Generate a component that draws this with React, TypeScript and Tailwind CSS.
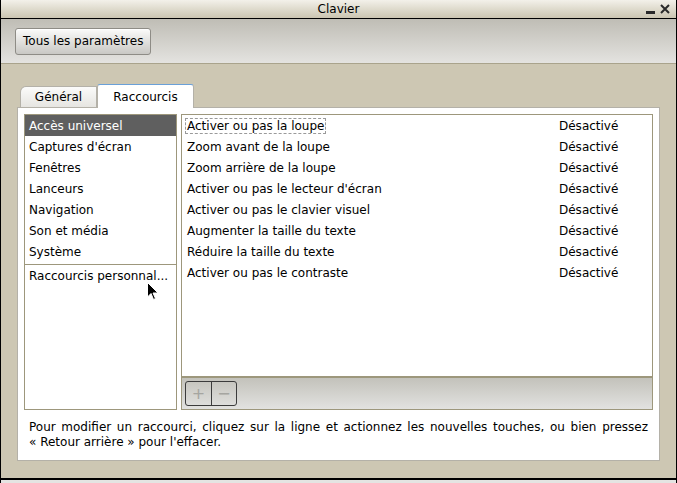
const categories = [
  "Accès universel",
  "Captures d'écran",
  "Fenêtres",
  "Lanceurs",
  "Navigation",
  "Son et média",
  "Système",
];

const shortcuts = [
  "Activer ou pas la loupe",
  "Zoom avant de la loupe",
  "Zoom arrière de la loupe",
  "Activer ou pas le lecteur d'écran",
  "Activer ou pas le clavier visuel",
  "Augmenter la taille du texte",
  "Réduire la taille du texte",
  "Activer ou pas le contraste",
];

function Cursor() {
  return (
    <svg
      className="absolute left-[147px] top-[282px]"
      width="12"
      height="19"
      viewBox="0 0 12 19"
    >
      <path
        d="M0.5 0.5 L0.5 15 L4 11.5 L6.5 17.5 L8.5 16.5 L6 11 L11 11 Z"
        fill="#000"
        stroke="#fff"
        strokeWidth="1"
      />
    </svg>
  );
}

export default function App() {
  return (
    <div
      className="relative w-[677px] h-[483px] flex flex-col bg-[#cdc7b3] text-[12px] text-black overflow-hidden"
      style={{ fontFamily: '"DejaVu Sans", sans-serif' }}
    >
      {/* barre de titre */}
      <div className="h-[19px] flex items-center justify-center relative bg-gradient-to-b from-[#f3f1ea] to-[#cbc5b1] border-b border-black border-x border-x-black shrink-0">
        <span className="leading-none">Clavier</span>
        <div className="absolute right-[6px] top-[4px] flex items-center gap-[5px]">
          <div className="w-[9px] h-[3px] bg-[#2a2a2a] mt-[6px]" />
          <svg width="10" height="10" viewBox="0 0 10 10">
            <path d="M1 1 L9 9 M9 1 L1 9" stroke="#2a2a2a" strokeWidth="2" />
          </svg>
        </div>
      </div>

      <div className="flex-1 flex flex-col border-x border-black">
        {/* barre d'outils */}
        <div className="h-[45px] shrink-0 flex items-center px-[14px] bg-gradient-to-b from-[#bfbdb5] to-[#e4e3e0] border-b border-[#a9a38c]">
          <button className="h-[27px] px-[7px] rounded-[3px] border border-[#8e8c86] bg-gradient-to-b from-[#fbfbfa] to-[#c9c8c4] shadow-[inset_0_1px_0_#fff]">
            Tous les paramètres
          </button>
        </div>

        {/* onglets */}
        <div className="flex-1 flex flex-col px-[16px] pt-[19px]">
          <div className="flex items-end h-[24px] pl-[3px]">
            <div className="h-[21px] w-[77px] flex items-center justify-center border border-b-0 border-[#b4b1a8] rounded-tl-[6px] bg-gradient-to-b from-[#fbfbfa] to-[#e6e5e1]">
              Général
            </div>
            <div className="h-[24px] w-[97px] flex items-center justify-center border border-b-0 border-[#b4b1a8] border-t-[#6aa0d8] rounded-t-[3px] bg-white -mb-px relative z-10">
              Raccourcis
            </div>
          </div>

          <div className="w-[643px] h-[354px] bg-white border border-[#b4b1a8] flex flex-col px-[6px] pt-[6px]">
            <div className="flex gap-[4px] h-[296px]">
              {/* catégories */}
              <div className="w-[153px] border border-[#9d977c] flex flex-col">
                {categories.map((c, i) => (
                  <div
                    key={c}
                    className={
                      i === 0
                        ? "h-[21px] flex items-center px-[4px] bg-[#5f5f5f] text-white"
                        : "h-[21px] flex items-center px-[4px]"
                    }
                  >
                    {c}
                  </div>
                ))}
                <div className="h-px bg-[#9d977c] mt-[2px]" />
                <div className="h-[21px] flex items-center px-[4px]">
                  Raccourcis personnal...
                </div>
              </div>

              {/* raccourcis */}
              <div className="flex-1 border border-[#9d977c] flex flex-col">
                <div className="flex-1 flex flex-col">
                  {shortcuts.map((s, i) => (
                    <div key={s} className="h-[21px] flex items-center">
                      <div className="w-[377px] pl-[3px]">
                        <span
                          className={
                            i === 0
                              ? "px-px border border-dashed border-[#9a9a9a]"
                              : "px-px border border-transparent"
                          }
                        >
                          {s}
                        </span>
                      </div>
                      <span>Désactivé</span>
                    </div>
                  ))}
                </div>
                <div className="h-[33px] shrink-0 border-t-2 border-[#9d977c] bg-gradient-to-b from-[#c3c2bb] to-[#e2e2e0] flex items-center px-[3px]">
                  <div className="h-[25px] flex rounded-[3px] border border-[#3b3b3b]">
                    <div className="w-[26px] flex items-center justify-center text-[#a5a5a0] text-[16px] border-r border-[#3b3b3b]">
                      +
                    </div>
                    <div className="w-[24px] flex items-center justify-center text-[#a5a5a0] text-[16px]">
                      −
                    </div>
                  </div>
                </div>
              </div>
            </div>

            <p className="mt-[10px] px-[5px] leading-[15px] text-justify">
              Pour modifier un raccourci, cliquez sur la ligne et actionnez les
              nouvelles touches, ou bien pressez {"«\u00a0Retour arrière\u00a0»"} pour
              l'effacer.
            </p>
          </div>
        </div>

        <div className="h-[17px] shrink-0" />
      </div>

      {/* bord inférieur */}
      <div className="h-[2px] bg-black shrink-0" />
      <div className="h-[3px] bg-[#e4e4e2] shrink-0 border-x border-black" />
      <div className="h-px bg-[#555] shrink-0" />

      <Cursor />
    </div>
  );
}
